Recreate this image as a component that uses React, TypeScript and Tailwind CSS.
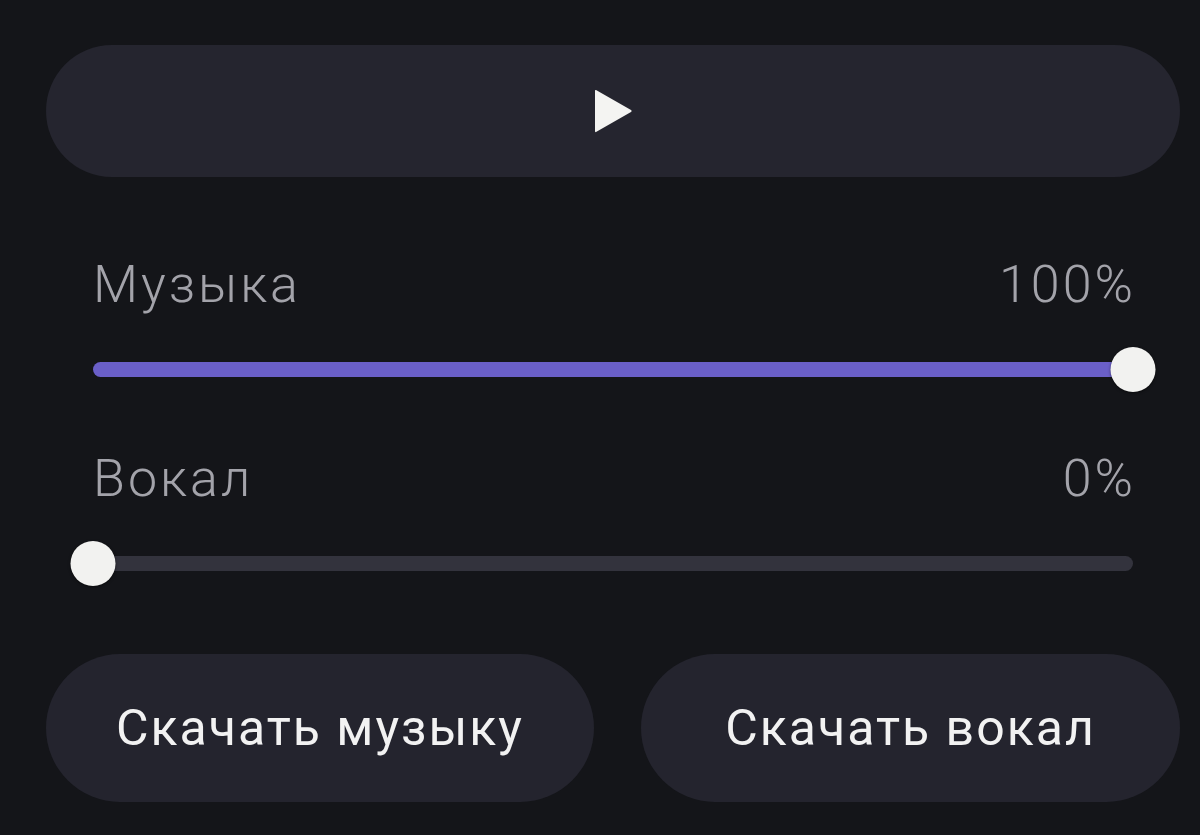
import React from "react";

const font = { fontFamily: "Roboto, 'Noto Sans', sans-serif" };

function Slider({ label, value, className }: { label: string; value: number; className?: string }) {
  return (
    <div className={className}>
      <div className="flex items-start justify-between text-[52px] leading-[50px] font-light tracking-[3px] text-[#a3a3aa]">
        <span>{label}</span>
        <span className="-mr-[3px]">{value}%</span>
      </div>
      <div className="relative mt-[37px] h-[45px] flex items-center">
        <div className="w-full h-[15px] rounded-full bg-[#33333d] overflow-hidden">
          <div className="h-full bg-[#6a5fc8]" style={{ width: `${value}%` }} />
        </div>
        <div
          className="absolute top-0 w-[45px] h-[45px] -translate-x-1/2 rounded-full bg-[#f2f2f0] shadow-[0_1px_3px_rgba(0,0,0,0.5)]"
          style={{ left: `${value}%` }}
        />
      </div>
    </div>
  );
}

export default function App() {
  return (
    <div className="w-[1200px] h-[835px] bg-[#141519] pl-[46px] pr-[20px] pt-[45px]" style={font}>
      <button className="w-full h-[132px] rounded-full bg-[#25252f] flex items-center justify-center">
        <svg width="40" height="48" viewBox="0 0 40 48" className="ml-[1px]">
          <path d="M2 3 L37 23 Q38.5 24 37 25 L2 45 Q1 45.5 1 44 L1 4 Q1 2.5 2 3 Z" fill="#f4f4f2" />
        </svg>
      </button>

      <div className="px-[47px] mt-[83px]">
        <Slider label="Музыка" value={100} />
        <Slider label="Вокал" value={0} className="mt-[62px]" />
      </div>

      <div className="grid grid-cols-[548px_1fr] gap-[47px] mt-[68px]">
        <button className="h-[148px] rounded-full bg-[#24242e] text-[#f2f2f2] text-[50px] tracking-[2px]">
          Скачать музыку
        </button>
        <button className="h-[148px] rounded-full bg-[#24242e] text-[#f2f2f2] text-[50px] tracking-[2px]">
          Скачать вокал
        </button>
      </div>
    </div>
  );
}
